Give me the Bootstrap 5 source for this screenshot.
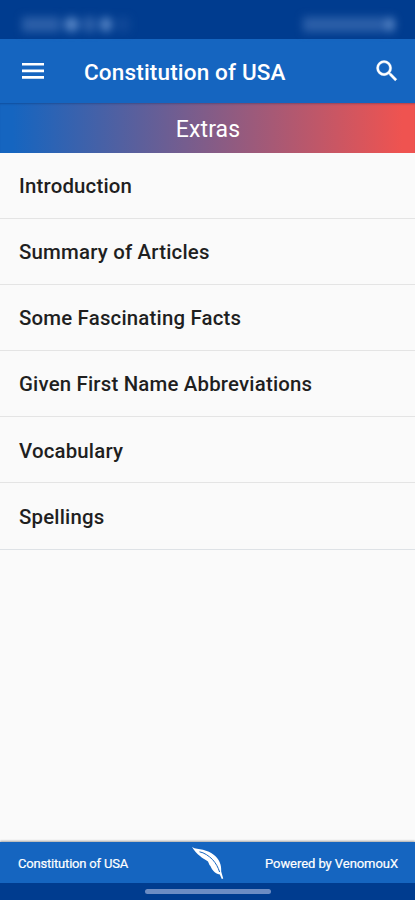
<!DOCTYPE html>
<html lang="en">
<head>
<meta charset="utf-8">
<meta name="viewport" content="width=device-width, initial-scale=1">
<title>Constitution of USA</title>
<link href="https://cdn.jsdelivr.net/npm/bootstrap@5.3.0/dist/css/bootstrap.min.css" rel="stylesheet">
<style>
body{font-family:Roboto,"Liberation Sans",sans-serif;background:#fafafa;height:900px;overflow:hidden}
.status-strip{height:38.5px;background:#003c8f;padding:14px 20px 0 22px}
.blur-group{filter:blur(4px);height:20px;padding-top:3px}
.smudge{height:15px;background:#3d6db4;opacity:.7}
.smudge-dot{background:#79a3dc;border-radius:50%}
.app-header{height:64.5px;background:#1565c0;padding:1px 14px 0 22px}
.app-title{font-size:22.5px;font-weight:500;line-height:30px;margin-left:40px;padding-top:1px;letter-spacing:.17px}
.extras-band{height:49.5px;font-size:23px;letter-spacing:.15px;padding:4px 0 0 1px;background:linear-gradient(90deg,#1565c0 0,#1565c0 3%,#ef5350 97%,#ef5350 100%);box-shadow:inset 0 2px 2px -1px rgba(0,30,80,.3)}
.menu-rows .list-group-item{height:66.2px;padding:2px 19px 0;background:#fafafa;color:#1f1f1f;border-color:#e4e4e4;border-width:0 0 1.5px;font-size:20.4px;font-weight:500;letter-spacing:.19px}
.foot-bar{height:41px;background:#1565c0;font-size:13px;padding:1px 17px 0 18px;box-shadow:0 -1px 2px rgba(0,0,0,.35)}
.foot-bar span{flex:1 1 0;letter-spacing:-.06px;-webkit-text-stroke:.2px #fff;padding-top:1px}
.foot-bar .foot-name{letter-spacing:-.19px}
.gesture-bar{height:17px;background:#003c8f}
.gesture-pill{width:126px;height:5px;border-radius:3px;background:#6c8cc3}
</style>
<script src="https://cdn.jsdelivr.net/npm/bootstrap@5.3.0/dist/js/bootstrap.bundle.min.js"></script>
</head>
<body class="d-flex flex-column">
<div class="status-strip d-flex justify-content-between flex-shrink-0">
  <div class="blur-group d-flex gap-1">
    <div class="smudge" style="width:38px"></div><div class="smudge smudge-dot" style="width:15px"></div><div class="smudge" style="width:13px"></div><div class="smudge smudge-dot" style="width:12px"></div><div class="smudge opacity-25" style="width:14px"></div>
  </div>
  <div class="blur-group d-flex"><div class="smudge" style="width:82px"></div><div class="smudge smudge-dot" style="width:10px"></div></div>
</div>
<header class="app-header d-flex align-items-center text-white flex-shrink-0">
  <svg width="22" height="16" viewBox="0 0 22 16" fill="#fff" role="img" aria-label="Menu"><path d="M0 0h22v2.6H0zM0 6.6h22v2.6H0zM0 13.1h22v2.6H0z"/></svg>
  <h1 class="app-title mb-0">Constitution of USA</h1>
  <svg class="ms-auto" width="28" height="28" viewBox="0 0 24 24" fill="#fff" stroke="#fff" stroke-width=".3" role="img" aria-label="Search"><path d="M15.5 14h-.79l-.28-.27A6.471 6.471 0 0 0 16 9.5 6.5 6.5 0 1 0 9.5 16c1.61 0 3.09-.59 4.23-1.57l.27.28v.79l5 4.99L20.49 19l-4.99-5zm-6 0C7.01 14 5 11.99 5 9.5S7.01 5 9.5 5 14 7.01 14 9.5 11.99 14 9.5 14z"/></svg>
</header>
<div class="extras-band d-flex align-items-center justify-content-center text-white flex-shrink-0"><span>Extras</span></div>
<div class="menu-rows list-group list-group-flush">
  <a class="list-group-item d-flex align-items-center"><span>Introduction</span></a>
  <a class="list-group-item d-flex align-items-center"><span>Summary of Articles</span></a>
  <a class="list-group-item d-flex align-items-center"><span>Some Fascinating Facts</span></a>
  <a class="list-group-item d-flex align-items-center"><span>Given First Name Abbreviations</span></a>
  <a class="list-group-item d-flex align-items-center"><span>Vocabulary</span></a>
  <a class="list-group-item d-flex align-items-center border-bottom"><span>Spellings</span></a>
</div>
<footer class="mt-auto flex-shrink-0">
  <div class="foot-bar d-flex align-items-center justify-content-between text-white">
    <span class="foot-name">Constitution of USA</span>
    <svg width="34" height="34" viewBox="0 0 34 34" role="img" aria-label="Quill"><path d="M1 1C4 3 8 2.800 12 3.800C16 4.800 20 6.500 23 9C28 13 30.500 18 30.200 25.500L32.200 32.500L30.800 33L28.800 28.500C26 28 24 27 22.500 25C20 22.500 20 20 18.500 19L17 15.500C14 13.500 11 12 9 10C6 8 3 4.500 1 1Z" fill="#fff"/><path d="M8.500 5.800C13 6.500 18 10 21.500 13.500C25 17.500 27 21 28.600 26" fill="none" stroke="#1565c0" stroke-width="1"/></svg>
    <span class="text-end">Powered by VenomouX</span>
  </div>
  <div class="gesture-bar d-flex align-items-center justify-content-center"><div class="gesture-pill"></div></div>
</footer>
</body>
</html>
